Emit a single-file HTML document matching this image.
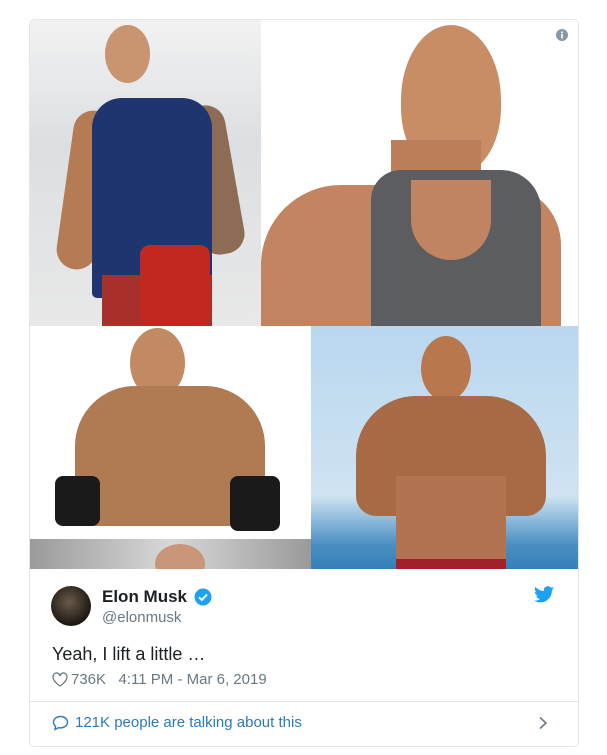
<!DOCTYPE html>
<html><head><meta charset="utf-8"><style>
body{margin:0;background:#fff;font-family:"Liberation Sans",Arial,sans-serif;}
.card{position:absolute;left:29px;top:19px;width:548px;height:726px;border:1px solid #e1e8ed;border-radius:5px;overflow:hidden;background:#fff}
.img{position:absolute;overflow:hidden}
.abs{position:absolute}
</style></head><body>
<div class="card">
 <!-- top-left -->
 <div class="img" style="left:0;top:0;width:231px;height:306px;background:linear-gradient(#f2f2f2,#dcdfe2 40%,#e8e8e8)">
  <div class="abs" style="left:75px;top:5px;width:45px;height:58px;border-radius:50%;background:#c99470"></div>
  <div class="abs" style="left:35px;top:90px;width:40px;height:160px;border-radius:20px;background:#b47b55;transform:rotate(8deg)"></div>
  <div class="abs" style="left:160px;top:85px;width:45px;height:150px;border-radius:20px;background:#8d6b55;transform:rotate(-10deg)"></div>
  <div class="abs" style="left:62px;top:78px;width:120px;height:200px;border-radius:30px 30px 5px 5px;background:#1f3570"></div>
  <div class="abs" style="left:72px;top:255px;width:110px;height:55px;background:#a8302a"></div>
  <div class="abs" style="left:110px;top:225px;width:70px;height:80px;border-radius:10px;background:#c2281f"></div>
 </div>
 <!-- top-right -->
 <div class="img" style="left:231px;top:0;width:317px;height:306px;background:#fff">
  <div class="abs" style="left:140px;top:5px;width:100px;height:150px;border-radius:50% 50% 45% 45%;background:#c98d66"></div>
  <div class="abs" style="left:130px;top:120px;width:90px;height:80px;background:#bd7f5a"></div>
  <div class="abs" style="left:0;top:165px;width:300px;height:160px;border-radius:80px 60px 0 0;background:#c28461"></div>
  <div class="abs" style="left:110px;top:150px;width:170px;height:170px;border-radius:30px 40px 0 0;background:#5b5d60"></div>
  <div class="abs" style="left:150px;top:160px;width:80px;height:80px;border-radius:0 0 45px 45px;background:#c08462"></div>
 </div>
 <!-- bottom-left -->
 <div class="img" style="left:0;top:306px;width:281px;height:243px;background:#fff">
  <div class="abs" style="left:100px;top:2px;width:55px;height:70px;border-radius:50%;background:#c28a62"></div>
  <div class="abs" style="left:45px;top:60px;width:190px;height:140px;border-radius:60px 60px 20px 20px;background:#b07a52"></div>
  <div class="abs" style="left:25px;top:150px;width:45px;height:50px;border-radius:8px;background:#1a1a1a"></div>
  <div class="abs" style="left:200px;top:150px;width:50px;height:55px;border-radius:8px;background:#1a1a1a"></div>
  <div class="abs" style="left:0;top:213px;width:281px;height:30px;background:linear-gradient(90deg,#9a9a9a,#d8d8d8,#9a9a9a)"></div>
  <div class="abs" style="left:125px;top:218px;width:50px;height:40px;border-radius:50%;background:#c9967a"></div>
 </div>
 <!-- bottom-right -->
 <div class="img" style="left:281px;top:306px;width:267px;height:243px;background:linear-gradient(#b9d7ef,#cfe3f2 70%,#4a8fc2 90%,#3580b8)">
  <div class="abs" style="left:110px;top:10px;width:50px;height:65px;border-radius:50%;background:#b9774e"></div>
  <div class="abs" style="left:45px;top:70px;width:190px;height:120px;border-radius:60px 60px 20px 20px;background:#a86a44"></div>
  <div class="abs" style="left:85px;top:150px;width:110px;height:95px;background:#b27450"></div>
  <div class="abs" style="left:85px;top:233px;width:110px;height:12px;background:#a31f2a"></div>
 </div>
 <svg class="abs" style="left:526px;top:9px" width="12" height="12" viewBox="0 0 12 12"><circle cx="6" cy="6" r="6" fill="#8899a6"/><rect x="5.2" y="5" width="1.6" height="4.5" fill="#fff"/><circle cx="6" cy="3.4" r="1" fill="#fff"/></svg>

 <!-- header -->
 <div class="abs" style="left:21px;top:566px;width:40px;height:40px;border-radius:50%;background:radial-gradient(circle at 45% 40%,#6a5a4a,#1d1812 70%)"></div>
 <div class="abs" style="left:72px;top:567px;font-size:17px;font-weight:bold;color:#1c2022">Elon Musk</div>
 <svg class="abs" style="left:164px;top:568px" width="18" height="18" viewBox="0 0 18 18"><circle cx="9" cy="9" r="8.5" fill="#1da1f2"/><path d="M5 9.3l2.8 2.6L13 6.5" stroke="#fff" stroke-width="2" fill="none"/></svg>
 <div class="abs" style="left:72px;top:589px;font-size:15px;color:#697882">@elonmusk</div>
 <svg class="abs" style="left:504px;top:566px" width="20" height="17" viewBox="0 0 24 20"><path fill="#1da1f2" d="M24 2.4a9.8 9.8 0 0 1-2.8.8A4.9 4.9 0 0 0 23.3.5a9.8 9.8 0 0 1-3.1 1.2A4.9 4.9 0 0 0 11.8 6 14 14 0 0 1 1.7.9a4.9 4.9 0 0 0 1.5 6.6A4.9 4.9 0 0 1 1 6.9a4.9 4.9 0 0 0 3.9 4.8 4.9 4.9 0 0 1-2.2.1 4.9 4.9 0 0 0 4.6 3.4A9.9 9.9 0 0 1 0 17.3 14 14 0 0 0 7.5 19.5c9.1 0 14-7.5 14-14v-.6A10 10 0 0 0 24 2.4z"/></svg>
 <div class="abs" style="left:22px;top:624px;font-size:18px;color:#1c2022">Yeah, I lift a little …</div>
 <svg class="abs" style="left:22px;top:652px" width="16" height="15" viewBox="0 0 16 15"><path d="M8 14S1 9.5 1 5a3.5 3.5 0 0 1 7-1 3.5 3.5 0 0 1 7 1c0 4.5-7 9-7 9z" fill="none" stroke="#697882" stroke-width="1.3"/></svg>
 <div class="abs" style="left:41px;top:651px;font-size:15px;color:#697882">736K&nbsp;&nbsp;&nbsp;4:11 PM - Mar 6, 2019</div>
 <div class="abs" style="left:0;top:681px;width:548px;height:1px;background:#e1e8ed"></div>
 <svg class="abs" style="left:22px;top:695px" width="17" height="16" viewBox="0 0 17 16"><path d="M8.5 1.5c4 0 7 2.6 7 5.7s-3 5.7-7 5.7c-.7 0-1.3 0-2-.2L3 14.5l.6-3.2C2.3 10.2 1.5 8.8 1.5 7.2c0-3.1 3-5.7 7-5.7z" fill="none" stroke="#2b7bb9" stroke-width="1.4"/></svg>
 <div class="abs" style="left:45px;top:694px;font-size:15px;color:#2b7bb9">121K people are talking about this</div>
 <svg class="abs" style="left:508px;top:696px" width="10" height="14" viewBox="0 0 10 14"><path d="M2 1.5L8 7l-6 5.5" fill="none" stroke="#697882" stroke-width="1.6"/></svg>
</div>
</body></html>
